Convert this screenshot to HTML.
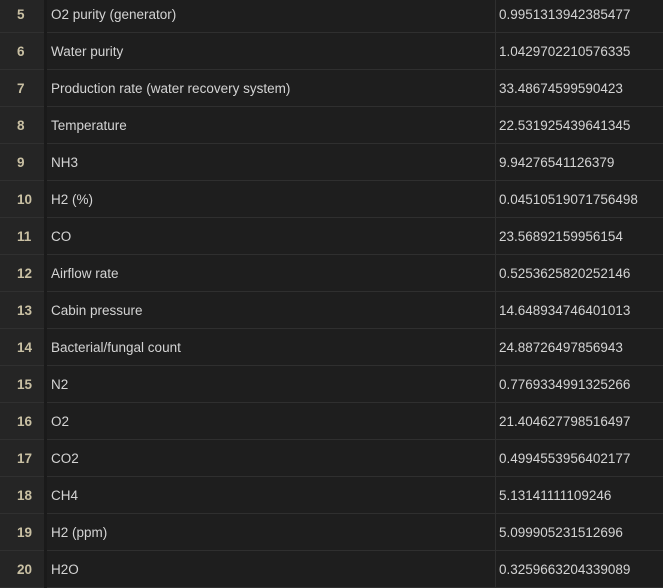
<!DOCTYPE html><html><head><style>
body{margin:0;background:#1e1e1e;width:663px;height:588px;overflow:hidden;font-family:"Liberation Sans",sans-serif;font-size:13.5px;color:#d4d4d4}
table{border-collapse:collapse;position:absolute;top:-4px;left:0;width:663px;table-layout:fixed}
td{height:36px;padding:0;border-bottom:1px solid #2f2f2f;white-space:nowrap;overflow:hidden}
td.i{width:27px;background:#252525;color:#c9c0a3;font-weight:bold;padding-left:17px;border-right:3px solid #1a1a1a;border-bottom-color:#303030}
td.n{padding-left:4px;width:444px;border-right:1px solid #2f2f2f}
td.v{padding-left:3px}
</style></head><body><table>
<tr><td class="i">5</td><td class="n">O2 purity (generator)</td><td class="v">0.9951313942385477</td></tr>
<tr><td class="i">6</td><td class="n">Water purity</td><td class="v">1.0429702210576335</td></tr>
<tr><td class="i">7</td><td class="n">Production rate (water recovery system)</td><td class="v">33.48674599590423</td></tr>
<tr><td class="i">8</td><td class="n">Temperature</td><td class="v">22.531925439641345</td></tr>
<tr><td class="i">9</td><td class="n">NH3</td><td class="v">9.94276541126379</td></tr>
<tr><td class="i">10</td><td class="n">H2 (%)</td><td class="v">0.04510519071756498</td></tr>
<tr><td class="i">11</td><td class="n">CO</td><td class="v">23.56892159956154</td></tr>
<tr><td class="i">12</td><td class="n">Airflow rate</td><td class="v">0.5253625820252146</td></tr>
<tr><td class="i">13</td><td class="n">Cabin pressure</td><td class="v">14.648934746401013</td></tr>
<tr><td class="i">14</td><td class="n">Bacterial/fungal count</td><td class="v">24.88726497856943</td></tr>
<tr><td class="i">15</td><td class="n">N2</td><td class="v">0.7769334991325266</td></tr>
<tr><td class="i">16</td><td class="n">O2</td><td class="v">21.404627798516497</td></tr>
<tr><td class="i">17</td><td class="n">CO2</td><td class="v">0.4994553956402177</td></tr>
<tr><td class="i">18</td><td class="n">CH4</td><td class="v">5.13141111109246</td></tr>
<tr><td class="i">19</td><td class="n">H2 (ppm)</td><td class="v">5.099905231512696</td></tr>
<tr><td class="i">20</td><td class="n">H2O</td><td class="v">0.3259663204339089</td></tr>
</table></body></html>
